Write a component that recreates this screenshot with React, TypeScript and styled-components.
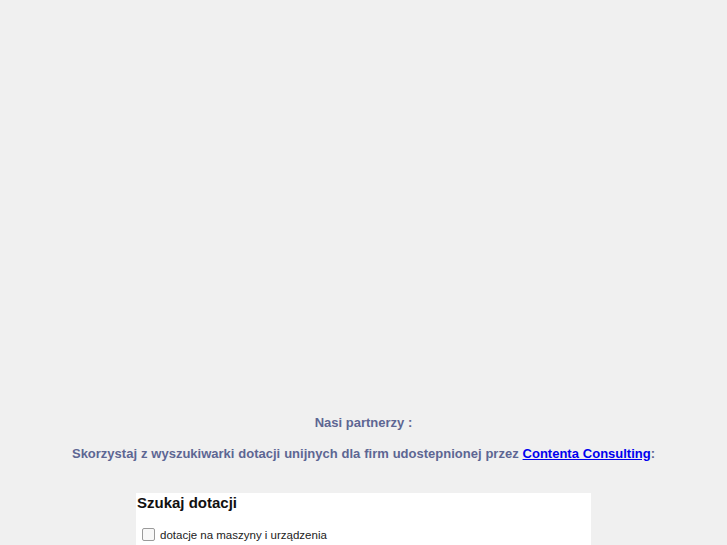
import React from 'react'
import styled, { createGlobalStyle } from 'styled-components'

const GlobalStyle = createGlobalStyle`
  html, body {
    margin: 0;
    padding: 0;
    background: #f0f0f0;
    height: 100%;
    overflow: hidden;
  }
`

const Page = styled.div`
  width: 727px;
  height: 545px;
  padding-top: 414px;
  box-sizing: border-box;
  display: flex;
  flex-direction: column;
  align-items: center;
  overflow: hidden;
  font-family: "Liberation Sans", Arial, sans-serif;
`

const Partners = styled.div`
  font-size: 13px;
  font-weight: bold;
  color: #5d6693;
  text-align: center;
  line-height: 18px;
`

const Intro = styled.p`
  margin: 13px 0 0 0;
  font-size: 13px;
  font-weight: bold;
  color: #5d6693;
  text-align: center;
  line-height: 18px;
  word-spacing: 0.3px;
`

const PartnerLink = styled.a`
  color: #0000ee;
  text-decoration: underline;
`

const SearchBox = styled.div`
  margin-top: 30px;
  width: 455px;
  flex: 1;
  background: #ffffff;
  align-self: flex-start;
  margin-left: 136px;
  padding: 1px 0 0 0;
`

const SearchTitle = styled.h3`
  margin: 0 0 0 1px;
  font-size: 15px;
  font-weight: bold;
  color: #111111;
  line-height: 18px;
`

const OptionRow = styled.label`
  display: flex;
  align-items: center;
  gap: 5px;
  margin: 16px 0 0 6px;
  font-size: 11.5px;
  color: #222222;
`

const Box = styled.span`
  width: 11px;
  height: 11px;
  border: 1px solid #9a9a9a;
  border-radius: 2px;
  background: #f8f8f8;
`

export default function App() {
  return (
    <Page>
      <GlobalStyle />
      <Partners>Nasi partnerzy :</Partners>
      <Intro>
        Skorzystaj z wyszukiwarki dotacji unijnych dla firm udostepnionej przez{' '}
        <PartnerLink href="#">Contenta Consulting</PartnerLink>:
      </Intro>
      <SearchBox>
        <SearchTitle>Szukaj dotacji</SearchTitle>
        <OptionRow>
          <Box />
          dotacje na maszyny i urządzenia
        </OptionRow>
      </SearchBox>
    </Page>
  )
}
